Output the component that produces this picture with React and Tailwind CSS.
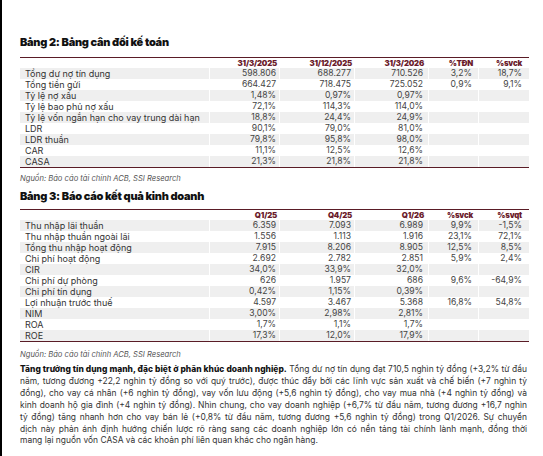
import React from "react";

const widths = ["w-[190px]", "w-[70px]", "w-[75px]", "w-[74px]", "w-[50px]", "w-[50px]"];
const pads = ["pl-[5px]", "pr-[3px]", "pr-[3px]", "pr-[5px]", "pr-[6px]", "pr-[7px]"];

const balance = {
  head: ["", "31/3/2025", "31/12/2025", "31/3/2026", "%TĐN", "%svck"],
  rows: [
    ["Tổng dư nợ tín dụng", "598.806", "688.277", "710.526", "3,2%", "18,7%"],
    ["Tổng tiền gửi", "664.427", "718.475", "725.052", "0,9%", "9,1%"],
    ["Tỷ lệ nợ xấu", "1,48%", "0,97%", "0,97%", "", ""],
    ["Tỷ lệ bao phủ nợ xấu", "72,1%", "114,3%", "114,0%", "", ""],
    ["Tỷ lệ vốn ngắn hạn cho vay trung dài hạn", "18,8%", "24,4%", "24,9%", "", ""],
    ["LDR", "90,1%", "79,0%", "81,0%", "", ""],
    ["LDR thuần", "79,8%", "95,8%", "98,0%", "", ""],
    ["CAR", "11,1%", "12,5%", "12,6%", "", ""],
    ["CASA", "21,3%", "21,8%", "21,8%", "", ""],
  ],
};

const income = {
  head: ["", "Q1/25", "Q4/25", "Q1/26", "%svck", "%svqt"],
  rows: [
    ["Thu nhập lãi thuần", "6.359", "7.093", "6.989", "9,9%", "-1,5%"],
    ["Thu nhập thuần ngoài lãi", "1.556", "1.113", "1.916", "23,1%", "72,1%"],
    ["Tổng thu nhập hoạt động", "7.915", "8.206", "8.905", "12,5%", "8,5%"],
    ["Chi phí hoạt động", "2.692", "2.782", "2.851", "5,9%", "2,4%"],
    ["CIR", "34,0%", "33,9%", "32,0%", "", ""],
    ["Chi phí dự phòng", "626", "1.957", "686", "9,6%", "-64,9%"],
    ["Chi phí tín dụng", "0,42%", "1,15%", "0,39%", "", ""],
    ["Lợi nhuận trước thuế", "4.597", "3.467", "5.368", "16,8%", "54,8%"],
    ["NIM", "3,00%", "2,98%", "2,81%", "", ""],
    ["ROA", "1,7%", "1,1%", "1,7%", "", ""],
    ["ROE", "17,3%", "12,0%", "17,9%", "", ""],
  ],
};

function Table({ data }) {
  return (
    <div className="w-[509px] border-b border-[#5a1c26]">
      <div className="flex h-[11px] border-t border-[#5a1c26]">
        {data.head.map((h, i) => (
          <div
            key={i}
            className={`${widths[i]} ${pads[i]} text-right text-[7.8px] leading-[10px] font-black tracking-tight text-[#6a1a2a]`}
          >
            {h}
          </div>
        ))}
      </div>
      {data.rows.map((r, ri) => (
        <div key={ri} className="flex h-[11px]">
          {r.map((c, i) => (
            <div
              key={i}
              className={`${widths[i]} ${pads[i]} ${
                i === 0 ? "text-left text-[9px] text-[#333]" : "text-right text-[8.6px] text-[#444]"
              } ${ri % 2 === 0 ? "bg-[#efefef]" : "bg-white"} ${
                i < 5 ? "border-r border-white" : ""
              } leading-[11px] whitespace-nowrap`}
            >
              {c}
            </div>
          ))}
        </div>
      ))}
    </div>
  );
}

function Source() {
  return (
    <p className="text-[7.6px] leading-[10px] italic text-[#555]">Nguồn: Báo cáo tài chính ACB, SSI Research</p>
  );
}

const lines = [
  "năm, tương đương +22,2 nghìn tỷ đồng so với quý trước), được thúc đẩy bởi các lĩnh vực sản xuất và chế biến (+7 nghìn tỷ",
  "đồng), cho vay cá nhân (+6 nghìn tỷ đồng), vay vốn lưu động (+5,6 nghìn tỷ đồng), cho vay mua nhà (+4 nghìn tỷ đồng) và",
  "kinh doanh hộ gia đình (+4 nghìn tỷ đồng). Nhìn chung, cho vay doanh nghiệp (+6,7% từ đầu năm, tương đương +16,7 nghìn",
  "tỷ đồng) tăng nhanh hơn cho vay bán lẻ (+0,8% từ đầu năm, tương đương +5,6 nghìn tỷ đồng) trong Q1/2026. Sự chuyển",
  "dịch này phản ánh định hướng chiến lược rõ ràng sang các doanh nghiệp lớn có nền tảng tài chính lành mạnh, đồng thời",
];

export default function App() {
  return (
    <div className="w-[543px] h-[456px] bg-white border-l-2 border-black overflow-hidden font-['Inter',sans-serif]">
      <div className="pl-[18px] pt-[36px]">
        <h2 className="text-[11px] leading-[13px] font-black tracking-tight text-[#111]">
          Bảng 2: Bảng cân đối kế toán
        </h2>
        <div className="mt-[8px]">
          <Table data={balance} />
        </div>
        <div className="mt-[6px]">
          <Source />
        </div>
        <h2 className="mt-[6px] text-[11px] leading-[13px] font-black tracking-tight text-[#111]">
          Bảng 3: Báo cáo kết quả kinh doanh
        </h2>
        <div className="mt-[6px]">
          <Table data={income} />
        </div>
        <div className="mt-[8px]">
          <Source />
        </div>
        <div className="mt-[4px] w-[507px] text-[8.45px] leading-[11.9px] text-[#333]">
          <p className="text-justify [text-align-last:justify] whitespace-nowrap">
            <span className="font-extrabold text-[#111]">
              Tăng trưởng tín dụng mạnh, đặc biệt ở phân khúc doanh nghiệp.
            </span>{" "}
            Tổng dư nợ tín dụng đạt 710,5 nghìn tỷ đồng (+3,2% từ đầu
          </p>
          {lines.map((l, i) => (
            <p key={i} className="text-justify [text-align-last:justify] whitespace-nowrap">
              {l}
            </p>
          ))}
          <p>mang lại nguồn vốn CASA và các khoản phí liên quan khác cho ngân hàng.</p>
        </div>
      </div>
    </div>
  );
}
